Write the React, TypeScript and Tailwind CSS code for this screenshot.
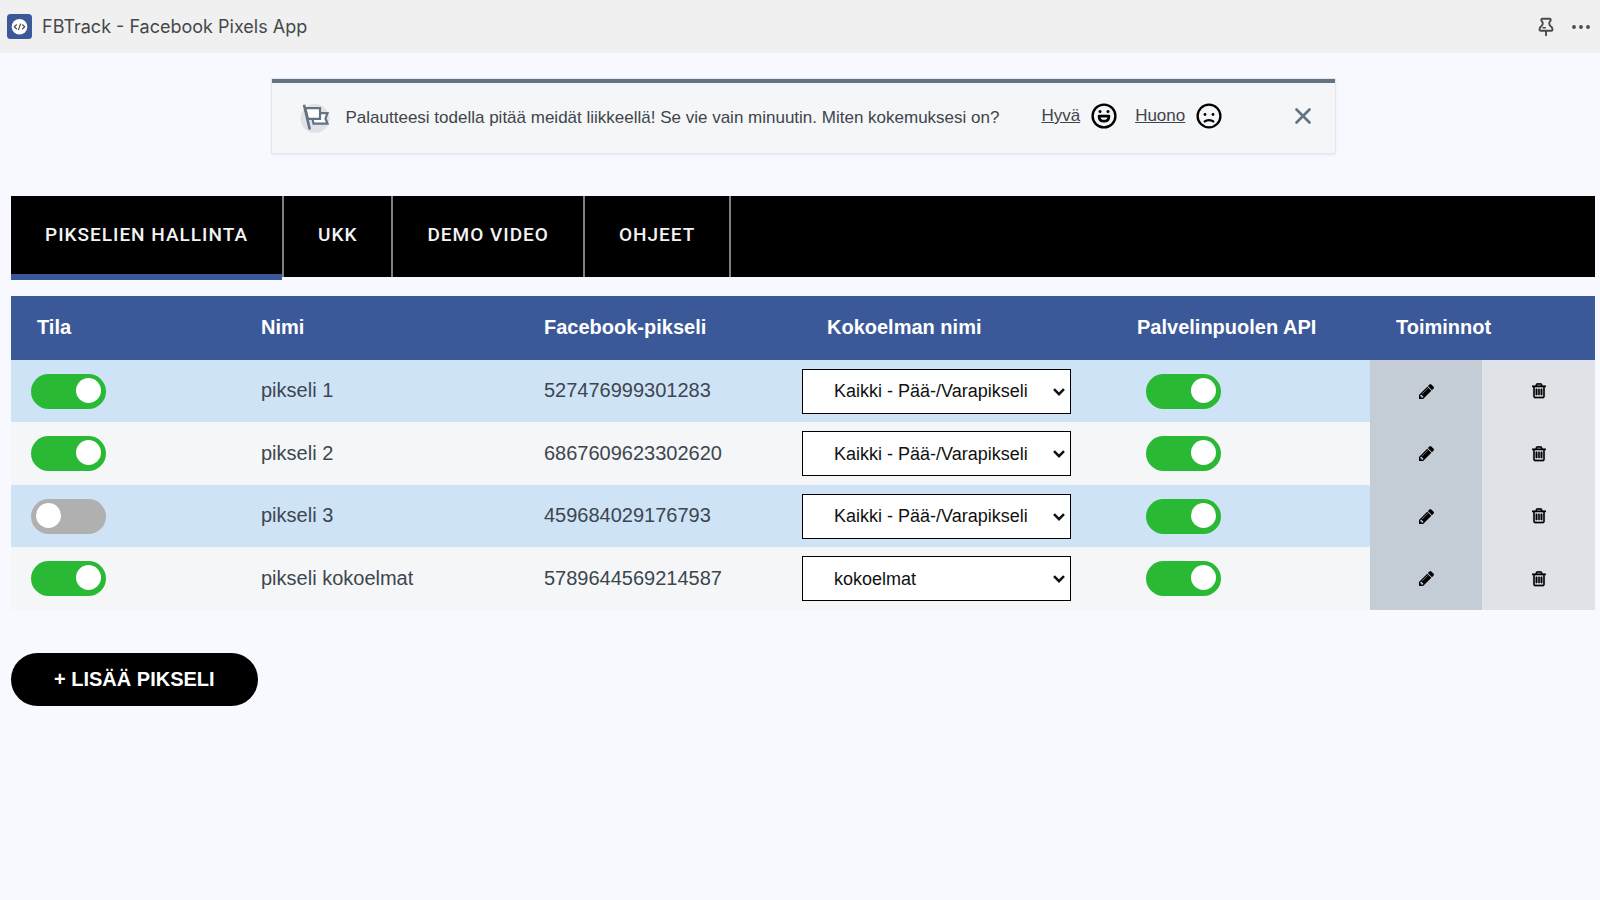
import { useState } from "react";

type Pixel = {
  id: number;
  active: boolean;
  name: string;
  pixelId: string;
  collection: string;
  serverApi: boolean;
};

const ALL = "Kaikki - Pää-/Varapikseli";
const COLLECTIONS = [ALL, "kokoelmat"];

const INITIAL: Pixel[] = [
  { id: 1, active: true, name: "pikseli 1", pixelId: "527476999301283", collection: ALL, serverApi: true },
  { id: 2, active: true, name: "pikseli 2", pixelId: "6867609623302620", collection: ALL, serverApi: true },
  { id: 3, active: false, name: "pikseli 3", pixelId: "459684029176793", collection: ALL, serverApi: true },
  { id: 4, active: true, name: "pikseli kokoelmat", pixelId: "5789644569214587", collection: "kokoelmat", serverApi: true },
];

const TABS = ["PIKSELIEN HALLINTA", "UKK", "DEMO VIDEO", "OHJEET"];

function AppLogo() {
  return (
    <svg className="size-[25px]" viewBox="0 0 25 25" aria-hidden="true">
      <rect width="25" height="25" rx="3.5" fill="#3b5998" />
      <circle cx="12.5" cy="12.8" r="7.8" fill="#fff" />
      <path d="M9.500 10.800 7.300 12.800l2.200 2M15.500 10.800l2.200 2-2.200 2M13.500 10l-2 5.600" fill="none" stroke="#4a4a4a" strokeWidth="1.200" strokeLinecap="round" strokeLinejoin="round" />
    </svg>
  );
}

function PinIcon() {
  return (
    <svg className="h-5 w-4" viewBox="0 0 16 20" fill="none" stroke="#4a4a4a" strokeWidth="1.900" strokeLinejoin="round" strokeLinecap="round" aria-hidden="true">
      <path d="M4.200 1.800h7.600c1.200 0 1.200 1.800.3 2.500-1.400 1.200-1 3.700.4 4.700 1.400.9 2 2.200 2 3.500 0 .8-.5 1.300-1.300 1.300H2.800c-.8 0-1.300-.5-1.300-1.300 0-1.300.6-2.600 2-3.500 1.400-1 1.800-3.500.4-4.700-.9-.7-.9-2.500.3-2.500z" />
      <path d="M8 14v4.300" />
      <path d="M5 10.800h2.400" strokeWidth="1.400" />
    </svg>
  );
}

function DotsIcon() {
  return (
    <svg className="h-5 w-[18px]" viewBox="0 0 18 20" fill="#4a4a4a" aria-hidden="true">
      <circle cx="2" cy="10" r="1.900" />
      <circle cx="9" cy="10" r="1.900" />
      <circle cx="16" cy="10" r="1.900" />
    </svg>
  );
}

function FlagIcon() {
  return (
    <svg className="size-[30px] shrink-0" viewBox="0 0 30 30" aria-hidden="true">
      <circle cx="15" cy="15.500" r="14.500" fill="#dfe3e8" />
      <g stroke="#637381" strokeWidth="2.200" fill="#fff">
        <path d="M16 10.200h11.500l-2 5.200 2 5.200H13.500l-.8-4z" />
        <path d="M5.300 5.200h14.700v10.600H7.900z" />
        <path d="M4 1.800 9.800 26.500" fill="none" strokeWidth="2.600" />
      </g>
    </svg>
  );
}

function HappyIcon() {
  return (
    <svg className="size-[26px]" viewBox="0 0 26 26" aria-hidden="true">
      <circle cx="13" cy="13" r="11.400" fill="none" stroke="#000" strokeWidth="2.400" />
      <circle cx="9" cy="8.400" r="1.500" />
      <circle cx="17" cy="8.400" r="1.500" />
      <path d="M8 13.200h10c0 3.500-2 5-5 5s-5-1.500-5-5z" fill="none" stroke="#000" strokeWidth="2.700" strokeLinejoin="round" />
    </svg>
  );
}

function SadIcon() {
  return (
    <svg className="size-[26px]" viewBox="0 0 26 26" aria-hidden="true">
      <circle cx="13" cy="13" r="11.400" fill="none" stroke="#000" strokeWidth="2.300" />
      <circle cx="9" cy="11.500" r="1.400" />
      <circle cx="17" cy="11.500" r="1.400" />
      <path d="M8.800 18.400c2-1.700 6.400-1.700 8.400 0" fill="none" stroke="#000" strokeWidth="2.400" strokeLinecap="round" />
    </svg>
  );
}

function CloseIcon() {
  return (
    <svg className="size-4" viewBox="0 0 16 16" fill="none" stroke="#637381" strokeWidth="2.600" strokeLinecap="round" aria-hidden="true">
      <path d="M1.500 1.500l13 13M14.500 1.500l-13 13" />
    </svg>
  );
}

function PencilIcon() {
  return (
    <svg className="size-[15px]" viewBox="0 149 1515 1515" fill="currentColor" aria-hidden="true">
      <path d="M363 1536l91-91-235-235-91 91v107h128v128h107zM886 608q0-22-22-22-10 0-17 7l-542 542q-7 7-7 17 0 22 22 22 10 0 17-7l542-542q7-7 7-17zM832 416l416 416-832 832H0v-416zM1515 512q0 53-37 90l-166 166-416-416 166-165q36-38 90-38 53 0 91 38l235 234q37 39 37 91z" />
    </svg>
  );
}

function TrashIcon() {
  return (
    <svg className="h-4 w-[14px]" viewBox="-20 172 1448 1640" fill="currentColor" stroke="currentColor" strokeWidth="60" aria-hidden="true">
      <path d="M512 800v576q0 14-9 23t-23 9h-64q-14 0-23-9t-9-23V800q0-14 9-23t23-9h64q14 0 23 9t9 23zm256 0v576q0 14-9 23t-23 9h-64q-14 0-23-9t-9-23V800q0-14 9-23t23-9h64q14 0 23 9t9 23zm256 0v576q0 14-9 23t-23 9h-64q-14 0-23-9t-9-23V800q0-14 9-23t23-9h64q14 0 23 9t9 23zm128 724V576H256v948q0 22 7 40.500t14.500 27 10.500 8.500h832q3 0 10.500-8.500t14.500-27 7-40.500zM480 448h448l-48-117q-7-9-17-11H546q-10 2-17 11zm928 32v64q0 14-9 23t-23 9h-96v948q0 83-47 143.500t-113 60.500H288q-66 0-113-58.500T128 1526V576H32q-14 0-23-9t-9-23v-64q0-14 9-23t23-9h309l70-167q15-37 54-63t79-26h320q40 0 79 26t54 63l70 167h309q14 0 23 9t9 23z" />
    </svg>
  );
}

function ArrowIcon() {
  return (
    <svg className="pointer-events-none absolute top-[19px] right-[6px] h-2 w-3" viewBox="0 0 12 8" fill="none" stroke="#111" strokeWidth="2.500" aria-hidden="true">
      <path d="M1 1.200l5 5 5-5" />
    </svg>
  );
}

function Toggle({ label, checked, onChange }: { label: string; checked: boolean; onChange: (value: boolean) => void }) {
  return (
    <input
      type="checkbox"
      role="switch"
      aria-label={label}
      checked={checked}
      onChange={(e) => onChange(e.target.checked)}
      className="flex h-[35px] w-[75px] cursor-pointer appearance-none items-start rounded-full bg-[#b0b0b0] px-[5px] pt-1 before:block before:size-[25px] before:rounded-full before:bg-white before:content-[''] checked:justify-end checked:bg-[#2ab934]"
    />
  );
}

export default function App() {
  const [pixels, setPixels] = useState(INITIAL);
  const [tab, setTab] = useState(TABS[0]);
  const [showFeedback, setShowFeedback] = useState(true);

  const update = (id: number, patch: Partial<Pixel>) =>
    setPixels((rows) => rows.map((row) => (row.id === id ? { ...row, ...patch } : row)));

  return (
    <div className="min-h-screen bg-[#f8f9ff] font-['Liberation_Sans',Arial,sans-serif] text-[#212b36]">
      <header className="flex h-[53px] items-center justify-between bg-[#f0f0f0] pr-[10px] pl-[7px]">
        <div className="flex items-center gap-[10px]">
          <AppLogo />
          <h1 className="font-['Inter',sans-serif] text-[18px] leading-6 text-[#45484b]">FBTrack - Facebook Pixels App</h1>
        </div>
        <div className="flex items-center gap-[18px]">
          <button type="button" aria-label="Kiinnitä"><PinIcon /></button>
          <button type="button" aria-label="Lisää toimintoja"><DotsIcon /></button>
        </div>
      </header>

      <main className="pr-[5px] pb-10 pl-[11px]">
        {showFeedback && (
          <section className="mx-auto mt-[26px] flex min-h-[74px] w-[1063px] max-w-full items-center border-t-4 border-[#637381] bg-[#f4f6f8] pr-6 pl-7 text-[17px] leading-6 shadow-[0_0_0_1px_#e4e7ee,0_1px_3px_#d5dae4]">
            <FlagIcon />
            <p className="ml-4 text-[#3f454b]">
              Palautteesi todella pitää meidät liikkeellä! Se vie vain minuutin. Miten kokemuksesi on?
            </p>
            <div className="mb-1 flex grow items-center pl-[42px]">
              <a href="#hyva" className="mr-[11px] text-[#3f454b] underline">Hyvä</a>
              <HappyIcon />
              <a href="#huono" className="mr-[11px] ml-[18px] text-[#3f454b] underline">Huono</a>
              <SadIcon />
              <button type="button" aria-label="Sulje" className="ml-auto" onClick={() => setShowFeedback(false)}>
                <CloseIcon />
              </button>
            </div>
          </section>
        )}

        <nav className="mt-[43px] flex h-[81px] bg-black font-['Roboto',sans-serif] text-[19px] leading-6 font-medium tracking-[1px] text-[#f4f4f4]">
          {TABS.map((name) => (
            <div key={name} className="border-[#808080] not-first:border-l-2 last:border-r-2">
              <button
                type="button"
                aria-current={tab === name ? "page" : undefined}
                onClick={() => setTab(name)}
                className={
                  tab === name
                    ? "h-[84px] border-b-6 border-[#3b5998] px-[34px]"
                    : "h-[81px] px-[34px] pb-1"
                }
              >
                {name}
              </button>
            </div>
          ))}
        </nav>

        <div className="mt-[19px] overflow-x-auto">
          <table className="w-full table-fixed text-left text-[20px] leading-6">
            <colgroup>
              <col className="w-[224px]" />
              <col className="w-[283px]" />
              <col className="w-[283px]" />
              <col className="w-[310px]" />
              <col className="w-[259px]" />
              <col className="w-[112px]" />
              <col className="w-[113px]" />
            </colgroup>
            <thead className="bg-[#3b5998] text-white">
              <tr className="h-[64px]">
                <th scope="col" className="px-[26px] pb-[2px]">Tila</th>
                <th scope="col" className="px-[26px] pb-[2px]">Nimi</th>
                <th scope="col" className="px-[26px] pb-[2px]">Facebook-pikseli</th>
                <th scope="col" className="px-[26px] pb-[2px]">Kokoelman nimi</th>
                <th scope="col" className="px-[26px] pb-[2px]">Palvelinpuolen API</th>
                <th scope="col" colSpan={2} className="px-[26px] pb-[2px]">Toiminnot</th>
              </tr>
            </thead>
            <tbody>
              {pixels.map((row) => (
                <tr key={row.id} className="h-[62px] odd:bg-[#cfe3f7] even:h-[63px] even:bg-[#f5f6f7]">
                  <td className="pl-5">
                    <Toggle label={`Tila: ${row.name}`} checked={row.active} onChange={(active) => update(row.id, { active })} />
                  </td>
                  <td className="px-[26px] pb-[2px] text-[#3c4650]">{row.name}</td>
                  <td className="px-[26px] pb-[2px] text-[#3c4650]">{row.pixelId}</td>
                  <td className="pl-px">
                    <div className="relative h-[45px] w-[269px]">
                      <select
                        aria-label={`Kokoelman nimi: ${row.name}`}
                        value={row.collection}
                        onChange={(e) => update(row.id, { collection: e.target.value })}
                        className="block size-full appearance-none border border-black bg-white pl-[31px] text-[18px] leading-6 text-[#111]"
                      >
                        {COLLECTIONS.map((name) => (
                          <option key={name}>{name}</option>
                        ))}
                      </select>
                      <ArrowIcon />
                    </div>
                  </td>
                  <td className="pl-[35px]">
                    <Toggle label={`Palvelinpuolen API: ${row.name}`} checked={row.serverApi} onChange={(serverApi) => update(row.id, { serverApi })} />
                  </td>
                  <td className="bg-[#c4cdd5]">
                    <button type="button" aria-label={`Muokkaa: ${row.name}`} className="mx-auto block text-black">
                      <PencilIcon />
                    </button>
                  </td>
                  <td className="bg-[#dfe3e8]">
                    <button type="button" aria-label={`Poista: ${row.name}`} className="mx-auto block text-black">
                      <TrashIcon />
                    </button>
                  </td>
                </tr>
              ))}
            </tbody>
          </table>
        </div>

        <button type="button" className="mt-[43px] h-[53px] rounded-full bg-black px-[43px] pb-[2px] text-[20px] leading-6 font-bold text-white">
          + LISÄÄ PIKSELI
        </button>
      </main>
    </div>
  );
}
